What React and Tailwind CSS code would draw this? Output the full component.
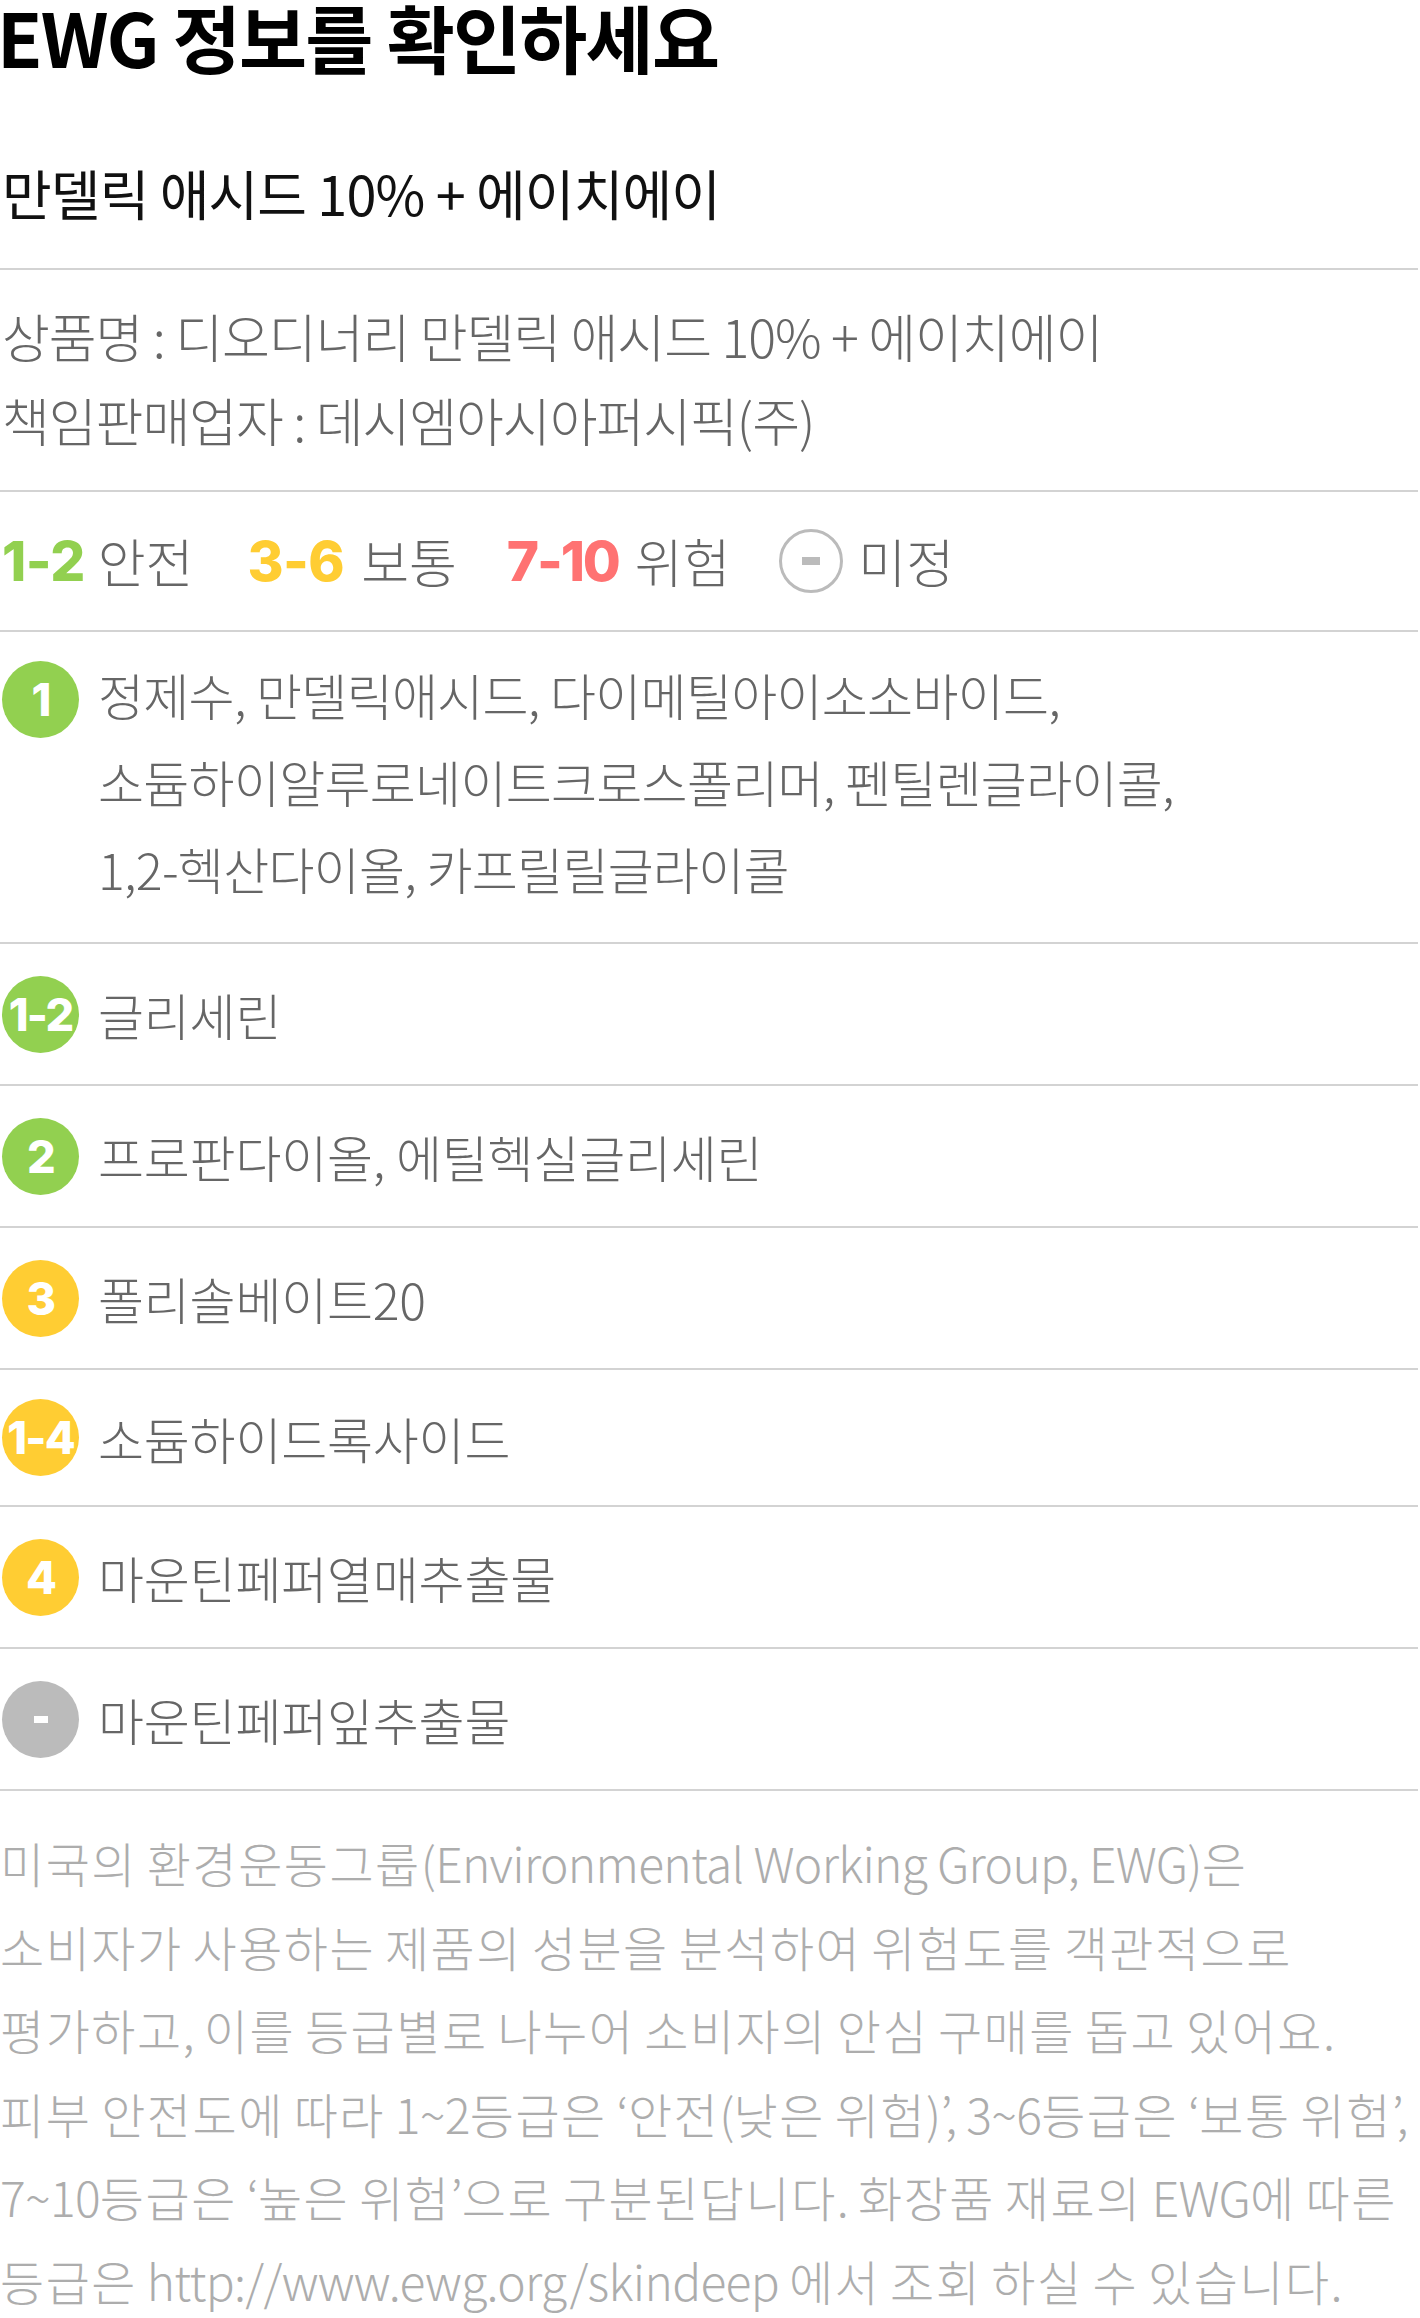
import React from "react";

const KR = "font-['Noto_Sans_CJK_KR','Noto_Sans',sans-serif]";
const NUM = "font-['Inter','Noto_Sans',sans-serif]";

function Badge({ label, color }) {
  const bg =
    color === "green"
      ? "bg-[#92d050]"
      : color === "yellow"
      ? "bg-[#ffcd33]"
      : "bg-[#bbbbbb]";
  return (
    <div
      className={`ml-[2px] flex h-[77px] w-[77px] shrink-0 items-center justify-center rounded-full ${bg}`}
    >
      {label === "-" ? (
        <span className="block h-[7px] w-[14px] bg-white" />
      ) : (
        <span
          className={`${NUM} text-[45px] font-extrabold leading-none tracking-[-0.04em] text-white`}
        >
          {label}
        </span>
      )}
    </div>
  );
}

// Hangul runs are set a little wider than the Latin/number runs, as in the reference
function Mixed({ text }) {
  const parts = text.split(/([가-힣]+)/);
  return parts.map((p, i) =>
    p === "" ? null : /[가-힣]/.test(p) ? (
      <span key={i} className="tracking-[0.031em]">
        {p}
      </span>
    ) : (
      <span key={i} className="tracking-[-0.015em]">
        {p}
      </span>
    )
  );
}

const rows = [
  { label: "1-2", color: "green", text: "글리세린", h: "h-[142px]" },
  { label: "2", color: "green", text: "프로판다이올, 에틸헥실글리세린", h: "h-[142px]" },
  { label: "3", color: "yellow", text: "폴리솔베이트20", h: "h-[142px]" },
  { label: "1-4", color: "yellow", text: "소듐하이드록사이드", h: "h-[137px]" },
  { label: "4", color: "yellow", text: "마운틴페퍼열매추출물", h: "h-[142px]" },
  { label: "-", color: "gray", text: "마운틴페퍼잎추출물", h: "h-[142px]" },
];

const para = [
  "미국의 환경운동그룹(Environmental Working Group, EWG)은",
  "소비자가 사용하는 제품의 성분을 분석하여 위험도를 객관적으로",
  "평가하고, 이를 등급별로 나누어 소비자의 안심 구매를 돕고 있어요.",
  "피부 안전도에 따라 1~2등급은 ‘안전(낮은 위험)’, 3~6등급은 ‘보통 위험’,",
  "7~10등급은 ‘높은 위험’으로 구분된답니다. 화장품 재료의 EWG에 따른",
  "등급은 http://www.ewg.org/skindeep 에서 조회 하실 수 있습니다.",
];

export default function App() {
  return (
    <div className={`${KR} min-h-[2318px] w-[1418px] overflow-hidden bg-white`}>
      {/* Header */}
      <div className="border-b-2 border-[#d3d3d3] pb-[45px] pt-[2px]">
        <h1 className="-ml-[3px] whitespace-nowrap text-[74px] font-bold leading-[67px] tracking-[-0.024em] text-black">
          EWG 정보를 확인하세요
        </h1>
        <p className="ml-[2px] mt-[94px] whitespace-nowrap text-[54px] font-normal leading-[60px] tracking-[-0.016em] text-[#111111]">
          만델릭 애시드 10% + 에이치에이
        </p>
      </div>

      {/* Info */}
      <div className="border-b-2 border-[#d3d3d3] pb-[28px] pt-[24px]">
        <p className="ml-[2px] whitespace-nowrap text-[52px] font-light leading-[84px] tracking-[-0.02em] text-[#666666]">
          상품명 : 디오디너리 만델릭 애시드 10% + 에이치에이
        </p>
        <p className="ml-[2px] whitespace-nowrap text-[52px] font-light leading-[84px] tracking-[-0.02em] text-[#666666]">
          책임판매업자 : 데시엠아시아퍼시픽(주)
        </p>
      </div>

      {/* Legend */}
      <div className="flex h-[140px] items-center border-b-2 border-[#d3d3d3]">
        <span className={`${NUM} ml-[2px] text-[55px] font-extrabold leading-none tracking-[-0.01em] text-[#92d050]`}>
          1-2
        </span>
        <span className="ml-[13px] text-[52px] font-light leading-none tracking-[0em] text-[#666666]">
          안전
        </span>
        <span className={`${NUM} ml-[54px] text-[55px] font-extrabold leading-none tracking-[-0.01em] text-[#ffcd33]`}>
          3-6
        </span>
        <span className="ml-[17px] text-[52px] font-light leading-none tracking-[0em] text-[#666666]">
          보통
        </span>
        <span className={`${NUM} ml-[50px] text-[55px] font-extrabold leading-none tracking-[-0.04em] text-[#ff7272]`}>
          7-10
        </span>
        <span className="ml-[16px] text-[52px] font-light leading-none tracking-[0em] text-[#666666]">
          위험
        </span>
        <span className="ml-[49px] flex h-[64px] w-[64px] items-center justify-center rounded-full border-[3px] border-[#bbbbbb]">
          <span className="block h-[8px] w-[18px] bg-[#bbbbbb]" />
        </span>
        <span className="ml-[15px] text-[52px] font-light leading-none tracking-[0em] text-[#666666]">
          미정
        </span>
      </div>

      {/* Item 1 (multi-line) */}
      <div className="flex items-start border-b-2 border-[#d3d3d3] pb-[30px] pt-[19px]">
        <div className="mt-[10px]">
          <Badge label="1" color="green" />
        </div>
        <div className="ml-[19px] whitespace-nowrap text-[50px] font-light leading-[87px] tracking-[-0.014em] text-[#666666]">
          <p>정제수, 만델릭애시드, 다이메틸아이소소바이드,</p>
          <p>소듐하이알루로네이트크로스폴리머, 펜틸렌글라이콜,</p>
          <p>1,2-헥산다이올, 카프릴릴글라이콜</p>
        </div>
      </div>

      {/* Single rows */}
      {rows.map((r) => (
        <div
          key={r.text}
          className={`flex items-center border-b-2 border-[#d3d3d3] ${r.h}`}
        >
          <Badge label={r.label} color={r.color} />
          <p className="ml-[19px] whitespace-nowrap text-[50px] font-light leading-none tracking-[-0.004em] text-[#666666]">
            {r.text}
          </p>
        </div>
      ))}

      {/* Paragraph */}
      <div className="pt-[30px]">
        {para.map((line) => (
          <p
            key={line}
            className="whitespace-nowrap text-[48px] font-light leading-[83.6px] text-[#adadad]"
          >
            <Mixed text={line} />
          </p>
        ))}
      </div>
    </div>
  );
}
